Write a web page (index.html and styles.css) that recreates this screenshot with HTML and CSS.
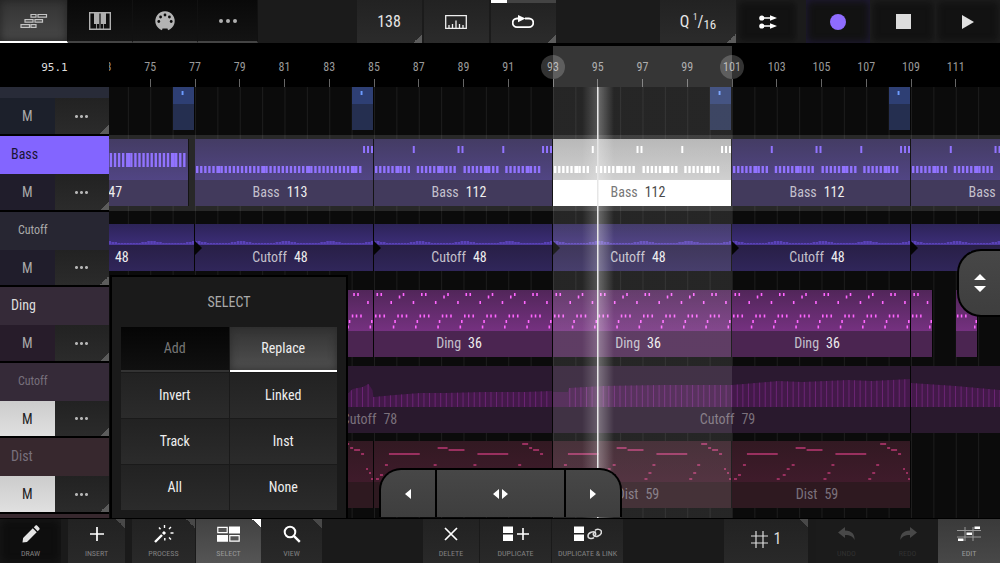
FILE: index.html
```html
<!DOCTYPE html>
<html lang="en">

<head>
    <meta charset="utf-8">
    <meta name="viewport" content="width=device-width, initial-scale=1">
    <title>Arranger</title>
    <link rel="stylesheet" href="styles.css">
</head>

<body>
    <header class="topbar">
        <nav class="group tabs">
            <button class="tab active" aria-label="Arrange">
                <svg width="28" height="16" viewBox="0 0 28 16" fill="none" stroke="#c4c4c4" stroke-width="1.2">
                    <path d="M11 1.5h5v2.6h-5zM18 1.5h8.500v2.600H18zM5 6.600h8v2.600H5zM15 6.600h7.500v2.600H15zM1 11.700h8.500v2.600H1zM11 11.700h5v2.600h-5z" />
                </svg>
            </button>
            <button class="tab" aria-label="Keys">
                <svg width="22" height="18" viewBox="0 0 22 18">
                    <path d="M.7.7h20.600v16.600H.7z" fill="none" stroke="#b0b0b0" stroke-width="1.400" />
                    <path d="M5 1h5v11H5zM12 1h5v11h-5z" fill="#b0b0b0" />
                    <path d="M7.500 12v5M14.500 12v5M11 1v16" stroke="#b0b0b0" stroke-width=".8" />
                </svg>
            </button>
            <button class="tab" aria-label="Midi">
                <svg width="20" height="20" viewBox="0 0 20 20">
                    <path d="M7 19.200A9.700 9.700 0 1 1 13 19.200L12.500 17.500h-5z" fill="#b4b4b4" />
                    <g fill="#0c0c0c">
                        <circle cx="3.800" cy="10.500" r="1.400" /><circle cx="5.600" cy="6" r="1.400" />
                        <circle cx="10" cy="4" r="1.400" /><circle cx="14.400" cy="6" r="1.400" />
                        <circle cx="16.200" cy="10.500" r="1.400" />
                    </g>
                </svg>
            </button>
            <button class="tab" aria-label="More"><svg width="18" height="4" fill="#b0b0b0"><circle cx="2" cy="2" r="2" /><circle cx="9" cy="2" r="2" /><circle cx="16" cy="2" r="2" /></svg></button>
        </nav>

        <div class="group transport">
            <button class="tool corner value">138</button>
            <button class="tool" aria-label="Metronome">
                <svg width="22" height="14" viewBox="0 0 22 14" fill="none" stroke="#eee" stroke-width="1.300">
                    <path d="M.7.7h20.600v12.600H.7zM4 13v-3M7.500 13v-4M11 13V5.500M14.500 13v-4M18 13v-3" />
                </svg>
            </button>
            <button class="tool corner loop" aria-label="Loop">
                <svg width="22" height="14" viewBox="0 0 22 14">
                    <path d="M6 3.500H5a4.200 4.200 0 0 0 0 8.600h12a4.300 4.300 0 0 0 0-8.600h-4" fill="none" stroke="#fff" stroke-width="1.800" />
                    <path d="M6 0l7.500 3.600L6 7.200z" fill="#fff" />
                </svg>
            </button>
        </div>

        <div class="group play">
            <button class="tool corner quant">Q <sup>1</sup>/<sub>16</sub></button>
            <button class="tool dark follow" aria-label="Follow">
                <svg width="18" height="14" viewBox="0 0 18 14" fill="#fff">
                    <circle cx="2.800" cy="3" r="2.600" /><circle cx="2.800" cy="11" r="2.600" />
                    <path d="M3 2.300h8V.2L18 3l-7 2.800V3.700H3zM3 10.300h8V8.200l7 2.800-7 2.800v-2.100H3z" />
                </svg>
            </button>
            <button class="tool dark record" aria-label="Record"><svg width="16" height="16"><circle cx="8" cy="8" r="8" fill="#8f6cff" /></svg></button>
            <button class="tool dark" aria-label="Stop"><svg width="15" height="15"><rect width="15" height="15" fill="#dcdcdc" /></svg></button>
            <button class="tool dark" aria-label="Play"><svg width="12" height="14"><path d="M0 0l12 7-12 7z" fill="#e0e0e0" /></svg></button>
        </div>
    </header>

    <main class="arranger">
        <aside class="sidebar">
            <div class="position">95.1</div>
            <div class="track-list">
                <section class="track t-drums">
                    <h2></h2>
                    <div class="track-buttons"><button>M</button><button class="corner" aria-label="Options"><span class="dots"></span></button></div>
                </section>
                <section class="track t-bass">
                    <h2>Bass</h2>
                    <div class="track-buttons"><button>M</button><button class="corner" aria-label="Options"><span class="dots"></span></button></div>
                </section>
                <section class="track sub t-cutoff">
                    <h2>Cutoff</h2>
                    <div class="track-buttons"><button>M</button><button class="corner" aria-label="Options"><span class="dots"></span></button></div>
                </section>
                <section class="track t-ding">
                    <h2>Ding</h2>
                    <div class="track-buttons"><button>M</button><button class="corner" aria-label="Options"><span class="dots"></span></button></div>
                </section>
                <section class="track sub muted t-ding">
                    <h2>Cutoff</h2>
                    <div class="track-buttons"><button>M</button><button class="corner" aria-label="Options"><span class="dots"></span></button></div>
                </section>
                <section class="track muted t-dist">
                    <h2>Dist</h2>
                    <div class="track-buttons"><button>M</button><button class="corner" aria-label="Options"><span class="dots"></span></button></div>
                </section>
                <section class="track t-dist"><h2></h2></section>
            </div>
        </aside>

        <div class="timeline">
            <div class="ruler" id="ruler"></div>
            <div class="lanes">
                <div class="lane drums" id="drums"></div>
                <div class="lane bass" id="bass"></div>
                <div class="lane sub cutoff" id="cutoff"></div>
                <div class="lane ding" id="ding"></div>
                <div class="lane sub filter" id="filter"></div>
                <div class="lane dist" id="dist"></div>
            </div>
            <div class="selection"></div>
            <div class="playhead"></div>
            <div class="nudge">
                <button aria-label="Back"><svg width="6" height="10"><path d="M6 0v10L0 5z" /></svg></button>
                <button aria-label="Move"><svg width="15" height="10"><path d="M6 0v10L0 5zM9 0v10l6-5z" /></svg></button>
                <button aria-label="Forward"><svg width="6" height="10"><path d="M0 0v10l6-5z" /></svg></button>
            </div>
            <button class="side-handle" aria-label="Zoom tracks"><svg width="12" height="18"><path d="M0 6h12L6 0zM0 12h12l-6 6z" /></svg></button>
            <div class="popup">
                <h3>SELECT</h3>
                <div class="options">
                    <button class="off">Add</button><button class="on">Replace</button>
                    <button>Invert</button><button>Linked</button>
                    <button>Track</button><button>Inst</button>
                    <button>All</button><button>None</button>
                </div>
            </div>
        </div>
    </main>

    <footer class="bottombar">
        <div class="group tools">
            <button class="draw">
                <svg width="18" height="18" viewBox="0 0 18 18" fill="#e4e4e4"><path d="M.5 17.500l.6-4.500L10.800 3.300l3.900 3.900L5 16.900zM11.800 2.300l1.500-1.500c.6-.6 1.400-.6 2 0l1.900 1.900c.6.6.6 1.400 0 2l-1.500 1.500z" /></svg>
                DRAW
            </button>
            <button class="insert corner-top">
                <svg width="18" height="18" viewBox="0 0 18 18"><path d="M9 2v14M2 9h14" stroke="#fff" stroke-width="1.700" /></svg>
                INSERT
            </button>
            <button class="process corner-top">
                <svg width="20" height="18" viewBox="0 0 20 18" stroke="#fff"><path d="M1 17l7-7" stroke-width="2.400" /><path d="M9 9l2-2" stroke-width="3" /><path d="M10.500 0v3M5 2.500l1.500 1.800M17 2l-2 2M16.500 8h3M15 12.500l2 2M10.800 13v2.500" stroke-width="1.400" /></svg>
                PROCESS
            </button>
            <button class="select corner-top">
                <svg width="23" height="18" viewBox="0 0 23 18"><path d="M.8 2.300h9.400v5.400H.8zM12.800 10.700h9.400v5.400h-9.400z" fill="#555" stroke="#fff" stroke-width="1.200" /><path d="M12 1.600h11v6.800H12zM0 10h11v6.800H0z" fill="#fff" /></svg>
                SELECT
            </button>
            <button class="view corner-top">
                <svg width="18" height="18" viewBox="0 0 18 18" fill="none" stroke="#fff"><circle cx="7" cy="7" r="5.300" stroke-width="2" /><path d="M10.800 10.800l6 6" stroke-width="2.400" /></svg>
                VIEW
            </button>
        </div>

        <div class="group edit-tools">
            <button class="delete">
                <svg width="18" height="18" viewBox="0 0 18 18"><path d="M3 3l12 12M15 3L3 15" stroke="#fff" stroke-width="1.700" /></svg>
                DELETE
            </button>
            <button class="duplicate">
                <svg width="28" height="18" viewBox="0 0 28 18"><path d="M1 1.500h10v6.500H1zM1 9.500h10V16H1z" fill="#fff" /><path d="M21 3v12M15 9h12" stroke="#fff" stroke-width="1.600" /></svg>
                DUPLICATE
            </button>
            <button class="duplicate">
                <svg width="28" height="18" viewBox="0 0 28 18"><path d="M0 1.500h10v6.500H0zM0 9.500h10V16H0z" fill="#fff" /><g fill="none" stroke="#ddd" stroke-width="1.500"><path d="M20 12.500c-1.500 1.500-6 1.500-6-1.500 0-3.500 6-5.500 7.500-3 .8 1.500-.5 3-2 3" /><path d="M21 5.500c1.500-2 6.500-1.500 6.500 1.500 0 3.500-6 6-8 3-.8-1.500.8-3 2.500-3" /></g></svg>
                DUPLICATE &amp; LINK
            </button>
        </div>

        <div class="group history">
            <button class="grid-size corner-top">
                <svg width="17" height="17" viewBox="0 0 17 17"><path d="M5 0v17M12 0v17M0 5h17M0 12h17" stroke="#ddd" stroke-width="1.200" /></svg>
                1
            </button>
            <button class="undo" disabled>
                <svg width="18" height="18" viewBox="0 0 18 18" fill="#484848"><path d="M7 2v3.500c7 .2 10 4 9.500 9.500-1.500-3.500-4-5-9.500-5V13L0 7.500z" /></svg>
                UNDO
            </button>
            <button class="undo" disabled>
                <svg width="18" height="18" viewBox="0 0 18 18" fill="#484848"><path d="M11 2v3.500c-7 .2-10 4-9.500 9.500 1.500-3.500 4-5 9.500-5V13l7-5.500z" /></svg>
                REDO
            </button>
            <button class="edit">
                <svg width="24" height="18" viewBox="0 0 24 18"><path d="M8 2v14M16 2v14M0 5.500h24M0 12h24" stroke="#999" stroke-width="1" /><path d="M17.500 1.500h5.500v2.500h-5.500zM9.500 7.500h5.500v2.500H9.500zM1 13.500h5.500V16H1z" fill="#fff" /></svg>
                EDIT
            </button>
        </div>
    </footer>

    <script src="script.js"></script>
</body>

</html>
```
FILE: styles.css
```css
*,
*:before,
*:after {
    padding: 0;
    margin: 0;
    box-sizing: border-box;
}

:root {
    --phrase: 179px;
    --bar: calc(var(--phrase) / 8);
    --start: -93px;
}

body {
    height: 100vh;
    display: flex;
    flex-direction: column;
    overflow: hidden;
    background: #000;
    color: #ddd;
    font-family: "Roboto Condensed", "Open Sans Condensed", "Liberation Sans Narrow", "DejaVu Sans Condensed", sans-serif;
    font-size: 14px;
}

button {
    border: 0;
    background: none;
    color: inherit;
    font: inherit;
    display: flex;
    align-items: center;
    justify-content: center;
}

svg {
    display: block;
    flex: none;
}

.group {
    display: flex;
}

.dots {
    width: 15px;
    height: 5px;
    background: radial-gradient(circle, #b4b4b4 1px, transparent 2px) 0 0 / 5px 5px;
}

/* top bar */

.topbar {
    height: 44px;
    flex: none;
    display: flex;
    justify-content: space-between;
    background: #1b1b1b;
    border-bottom: 1px solid #000;
    font-size: 16px;
}

.tab {
    width: 65px;
    background: linear-gradient(#090909, #131313);
    border-bottom: 2px solid #444;
    border-right: 1px solid #111;
}

.tab.active {
    width: 68px;
    background: linear-gradient(#333, #484848);
    border-bottom-color: #fff;
    box-shadow: inset 0 0 8px #222;
}

.tab:last-child {
    width: 60px;
}

.transport {
    margin-right: 6px;
    gap: 2px;
}

.tool {
    width: 65px;
    background: linear-gradient(#222, #2b2b2b);
    color: #e6e6e6;
}

.tool.corner,
.track-buttons .corner {
    background: linear-gradient(135deg, transparent 50%, #5c5c5c 50%) right bottom / 9px 9px no-repeat, linear-gradient(#222, #2b2b2b);
}

.loop {
    position: relative;
}

.loop:before {
    content: "";
    position: absolute;
    top: 0;
    left: 0;
    width: 100%;
    height: 3px;
    background: linear-gradient(90deg, #fff 16px, #444 16px);
}

.play {
    gap: 1px;
}

.tool.dark {
    width: 64px;
    background: #121212;
    box-shadow: inset 0 0 8px #222;
}

.tool.follow {
    width: 61px;
}

.tool.quant {
    width: 76px;
    white-space: pre;
}

.quant sup {
    font-size: 9px;
    align-self: flex-start;
    padding-top: 12px;
}

.quant sub {
    font-size: 13px;
    padding-top: 6px;
}

.tool.record {
    margin-left: 7px;
    box-shadow: inset 0 0 8px #221c3c;
}

/* arranger */

.arranger {
    flex: 1;
    min-height: 0;
    display: grid;
    grid-template-columns: 109px 1fr;
}

.sidebar,
.timeline {
    display: flex;
    flex-direction: column;
    min-width: 0;
    overflow: hidden;
}

.position {
    height: 43px;
    flex: none;
    display: flex;
    align-items: center;
    justify-content: center;
    padding-top: 3px;
    font-family: "DejaVu Sans Mono", monospace;
    font-size: 11px;
}

.track-list,
.lanes {
    flex: 1;
    min-height: 0;
    overflow: hidden;
}

.track,
.lane {
    height: 76px;
    border-top: 1px solid #000;
}

.track.sub,
.lane.sub {
    height: 75px;
}

.track {
    display: flex;
    flex-direction: column;
}

.track:first-child,
.lane:first-child {
    margin-top: -28px;
}

.track h2 {
    height: 38px;
    flex: none;
    padding-left: 11px;
    font-size: 14px;
    font-weight: normal;
    line-height: 37px;
}

.track.sub h2 {
    padding-left: 18px;
    font-size: 12px;
    color: #aaa;
}

.track.muted h2 {
    color: #77707c;
}

.track-buttons {
    flex: 1;
    display: grid;
    grid-template-columns: 1fr 1fr;
    border-bottom: 1px solid #000;
    color: #aaa;
}

.t-drums h2 { background: #282b38; }
.t-drums button:first-child { background: #1c202b; }
.t-bass h2 { background: #8365ff; color: #1a1433; }
.t-bass button:first-child { background: #201d2b; }
.t-cutoff h2 { background: #272632; }
.t-cutoff button:first-child { background: #201d2b; }
.t-ding h2 { background: #352a38; }
.t-ding button:first-child { background: #271c2a; }
.t-dist h2 { background: #37282e; }

.muted button:first-child {
    background: linear-gradient(#ccc, #e0e0e0);
    color: #222;
}

/* timeline */

.timeline {
    position: relative;
}

/* ruler begins at bar 72, so every cell is centred on an odd bar */
.ruler {
    height: 43px;
    flex: none;
    display: flex;
    margin-left: calc(var(--start) + var(--bar) * 3);
    font-size: 12px;
    color: #999;
}

.ruler span {
    width: calc(var(--bar) * 2);
    flex: none;
    padding-top: 16px;
    text-align: center;
    background: linear-gradient(#666, #666) center bottom / 1px 8px no-repeat;
}

.lanes {
    background: #0b0b0b linear-gradient(90deg, #1d1d1d 1px, transparent 1px) var(--start) 0 / var(--bar) 100%;
}

.lane {
    display: flex;
    align-items: flex-start;
    padding-top: 3px;
    margin-left: var(--start);
    border-top-color: transparent;
}

.lane.bass {
    background: rgba(255, 255, 255, .12);
}

.lane.cutoff {
    padding-top: 12px;
}

.clip {
    flex: none;
    height: 67px;
    display: flex;
    flex-direction: column;
    border-right: 1px solid rgba(0, 0, 0, .5);
}

.clip svg {
    width: 100%;
    height: 41px;
}

.clip p {
    flex: 1;
    display: flex;
    align-items: center;
    justify-content: center;
    gap: 7px;
    padding: 0 8px 2px 0;
    white-space: nowrap;
    overflow: hidden;
    color: #c4c0cc;
}

.clip b {
    font-weight: normal;
    color: #eee;
}

.drums svg { background: #2e3f74; fill: #6d9cff; }
.drums p { background: #252f50; }
.bass svg { background: linear-gradient(#443c64, #514584); fill: #9173ff; }
.bass p { background: #423a5c; }
.cutoff svg { background: linear-gradient(#2d2458, #3c2d78); fill: #5a42b8; }
.cutoff p { background: linear-gradient(#281f46, #30265a); }
.ding svg { background: linear-gradient(#512659, #753180); fill: #ff66ff; }
.ding p { background: #4b2551; }
.filter svg { background: #2b1930; fill: #431949; stroke: #6b2574; }
.filter p { background: #29192d; }
.dist svg { background: linear-gradient(#321922, #3f1b2b); fill: #99305f; }
.dist p { background: #2e1920; }

.filter p,
.filter b,
.dist p,
.dist b {
    color: #7b717c;
}

.cutoff .clip {
    height: 47px;
    position: relative;
}

.cutoff .clip svg {
    height: 21px;
}

.cutoff .clip:before {
    content: "";
    position: absolute;
    left: 0;
    top: 17px;
    border: 7px solid transparent;
    border-left-color: #050505;
    border-right: 0;
}

.bass .picked svg { background: linear-gradient(#b0b0b0, #cacaca); fill: #fff; }
.bass .picked p { background: #fff; color: #666; }
.bass .picked b { color: #333; }

.selection {
    position: absolute;
    top: 2px;
    bottom: 0;
    left: calc(var(--start) + var(--phrase) * 3);
    width: var(--phrase);
    background: linear-gradient(rgba(255, 255, 255, .21) 41px, rgba(255, 255, 255, .11) 41px);
}

.selection:before,
.selection:after {
    content: "";
    position: absolute;
    top: 9px;
    left: -12px;
    width: 24px;
    height: 24px;
    border-radius: 50%;
    background: rgba(255, 255, 255, .2);
}

.selection:after {
    left: auto;
    right: -12px;
}

.playhead {
    position: absolute;
    top: 43px;
    bottom: 0;
    left: calc(var(--start) + var(--phrase) * 3 + var(--bar) * 2 - 16px);
    width: 32px;
    background: linear-gradient(90deg, transparent, rgba(255, 255, 255, .2) 15px, #e6e6e6 15px, #e6e6e6 16px, rgba(255, 255, 255, .3) 17px, transparent);
}

.nudge {
    position: absolute;
    left: 270px;
    bottom: 1px;
    width: 243px;
    height: 49px;
    display: grid;
    grid-template-columns: 54px 1fr 54px;
    gap: 2px;
    border: 2px solid #000;
    border-bottom: 0;
    border-radius: 22px 22px 0 0;
    overflow: hidden;
    background: #000;
    fill: #fff;
}

.nudge button,
.side-handle {
    background: linear-gradient(#474747, #3e3e3e);
}

.side-handle {
    position: absolute;
    right: 0;
    top: 205px;
    width: 43px;
    height: 68px;
    border: 2px solid #000;
    border-right: 0;
    border-radius: 24px 0 0 24px;
    fill: #fff;
}

.popup {
    position: absolute;
    left: 1px;
    bottom: 0;
    width: 238px;
    padding: 0 9px 8px;
    border: 2px solid #000;
    border-bottom: 0;
    background: #1a1a1a;
}

.popup h3 {
    font-size: 14px;
    font-weight: normal;
    line-height: 50px;
    text-align: center;
    color: #aaa;
}

.options {
    display: grid;
    grid-template-columns: 1fr 1fr;
    grid-auto-rows: 45px;
    gap: 1px;
}

.options button {
    padding-bottom: 1px;
    background: linear-gradient(#222, #2b2b2b);
    color: #eee;
}

.options .off {
    background: linear-gradient(#050505, #101010);
    border-bottom: 2px solid #333;
    color: #777;
}

.options .on {
    background: linear-gradient(#333, #505050);
    border-bottom: 2px solid #fff;
    box-shadow: inset 0 0 8px #2c2c2c;
}

/* bottom bar */

.bottombar {
    height: 45px;
    flex: none;
    display: flex;
    justify-content: space-between;
    background: #1a1a1a;
    border-top: 1px solid #000;
}

.bottombar button {
    flex-direction: column;
    gap: 6px;
    padding-top: 1px;
    background-image: linear-gradient(#222, #292929);
    font-size: 8px;
    line-height: 10px;
    color: #808080;
    white-space: nowrap;
}

.bottombar .corner-top {
    background: linear-gradient(45deg, transparent 50%, #484848 50%) right top / 9px 9px no-repeat, linear-gradient(#222, #292929);
}

.draw { width: 61px; }
.insert { width: 57px; margin-left: 7px; }
.process { width: 63px; margin-left: 7px; }
.select { width: 65px; margin-left: 1px; }
.view { width: 61px; }
.delete { width: 56px; }
.duplicate { width: 71px; }
.undo { width: 61px; }
.edit { width: 62px; }

.edit-tools {
    gap: 1px;
}

.bottombar .draw {
    background: #0e0e0e;
    box-shadow: inset 0 0 8px #1a1a1a;
}

.bottombar .select {
    background: linear-gradient(45deg, transparent 50%, #fff 50%) right top / 9px 9px no-repeat, linear-gradient(#424242, #555);
    color: #999;
}

.bottombar .grid-size {
    width: 84px;
    margin-right: 8px;
    padding: 0 0 4px;
    flex-direction: row;
    font-size: 16px;
    color: #ddd;
}

.bottombar .undo {
    background: #1b1b1b;
    color: #303030;
}

.bottombar .edit {
    background: linear-gradient(#3a3a3a, #484848);
    color: #999;
}
```
FILE: script.js
```js
const barWidth = 179 / 8;
const firstBar = 69;

const rect = (x, y, w, h) => `<rect x="${x}" y="${y}" width="${w}" height="${h}"/>`;

// bass: high accents plus low groups of sixteenths
function bassNotes(accents, groups, top = 27, height = 7) {
    let out = accents.map(x => rect(x, 7, 2, 7)).join("");
    for (const [from, to] of groups) {
        let i = 0;
        for (let x = from; x < to - 1; x += 4.1) {
            out += rect(x, top, i % 11 == 5 ? 4 : 2.4, height);
            i++;
        }
    }
    return out;
}

function cutoffNotes(bars) {
    let out = "";
    for (let x = 0; x < bars * barWidth; x += 3) {
        const phase = x % (barWidth * 2);
        const d = Math.min(phase, barWidth * 2 - phase);
        const h = d < 5 ? 3 : d < 11 ? 2 : 1;
        out += rect(x, 20 - h, 2.6, h);
    }
    return out + rect(0, 20, 400, 0.6);
}

function dingNotes(bars) {
    const shapes = "ABABABBA";
    let out = "";
    for (let i = 0; i <= bars; i++) {
        const x = i * barWidth;
        if (i > 0) out += rect(x - 2, 30, 1.6, 3) + rect(x - 3.5, 35.5, 1.6, 3);
        if (i == bars) break;
        for (const n of [1, 5, 9.5]) out += rect(x + n, 24.5, 1.6, 3);
        out += rect(x + 2.5, shapes[i] == "A" ? 3 : 5.5, 1.6, 3);
        out += rect(x + 6.5, 3, 1.6, 3) + rect(x + 16.5, 11, 1.6, 3);
    }
    return out;
}

function distNotes() {
    const notes = [[2, 5, 37], [6, 9, 33], [11, 14, 23], [15, 46, 12], [45, 48, 37], [51, 54, 33], [55, 58, 27],
        [60, 63, 23], [64, 74, 6], [75, 91, 8], [92, 95, 37], [96, 99, 31], [100, 103, 23], [104, 135, 12],
        [137, 140, 37], [141, 144, 31], [145, 148, 23], [149, 155, 2], [156, 159, 6], [160, 166, 8],
        [167, 170, 12], [172, 174, 27], [175, 177, 31], [177, 179, 37]];
    return notes.map(([a, b, y]) => rect(a, y, b - a, 2)).join("");
}

// automation curve: filled area with a step line every few pixels
function curve(points, linesFrom = 0) {
    const last = points[points.length - 1];
    const area = points.map(p => p.join(" ")).join("L");
    let lines = "";
    for (let i = 1; i < points.length; i++) {
        const [x0, y0] = points[i - 1], [x1, y1] = points[i];
        for (let x = Math.ceil(x0 / 5.6) * 5.6; x < x1; x += 5.6) {
            if (x >= linesFrom) lines += `M${x} 41V${y0 + (y1 - y0) * (x - x0) / (x1 - x0)}`;
        }
    }
    return `<path stroke="none" d="M${points[0][0]} 41L${area}L${last[0]} 41z"/><path fill="none" d="${lines}"/>`;
}

const accents = [39, 84, 88, 129, 169, 173, 177];
const phraseGroups = [[1, 37], [43, 82], [90, 127], [132, 168]];
const bass112 = bassNotes(accents, phraseGroups);
const hit = rect(9, 28, 2, 4);

// [first bar, length in bars, name, number, notes]
const lanes = {
    drums: [76, 84, 100, 108].map(bar => [bar, 1, "", "", hit]),
    bass: [
        [69, 7.75, "Bass", 47, bassNotes([], [[0, 172]], 14, 14)],
        [77, 8, "Bass", 113, bassNotes([169, 173, 177], [[1, 168]])],
        [85, 8, "Bass", 112, bass112],
        [93, 8, "Bass", 112, bass112, "picked"],
        [101, 8, "Bass", 112, bass112],
        [109, 8, "Bass", 112, bass112]
    ],
    cutoff: [69, 77, 85, 93, 101, 109].map(bar => [bar, 8, "Cutoff", 48, cutoffNotes(8)]),
    ding: [
        [77, 8, "", "", dingNotes(8)],
        ...[85, 93, 101].map(bar => [bar, 8, "Ding", 36, dingNotes(8)]),
        [109, 1, "", "", dingNotes(1)],
        [111, 1, "", "", dingNotes(1)]
    ],
    filter: [
        [77, 16, "Cutoff", 78, curve([[140, 30], [154, 27], [158, 23], [168, 21], [174, 18], [178, 24], [179, 31], [200, 29], [226, 27], [250, 27], [290, 26], [330, 26], [358, 25]])],
        [93, 16, "Cutoff", 79, curve([[0, 26], [15, 26], [16, 22], [50, 20], [110, 19], [147, 19], [179, 19], [203, 17], [226, 15], [250, 16], [296, 14], [320, 15], [358, 13]], 16)],
        [109, 8, "", "", curve([[0, 17], [45, 20], [89, 24], [179, 30]])]
    ],
    dist: [
        [77, 8, "", "", distNotes()],
        ...[85, 93, 101].map(bar => [bar, 8, "Dist", 59, distNotes()])
    ]
};

for (const id in lanes) {
    let end = firstBar;
    let html = "";
    const height = id == "cutoff" ? 21 : 41;
    for (const [bar, length, name, number, notes, state] of lanes[id]) {
        const width = length * barWidth;
        html += `<div class="clip ${state || ""}" style="width:${width}px;margin-left:${(bar - end) * barWidth}px">
            <svg viewBox="0 0 ${width} ${height}" preserveAspectRatio="none">${notes}</svg>
            <p>${name} <b>${number}</b></p></div>`;
        end = bar + length;
    }
    document.getElementById(id).innerHTML = html;
}

let marks = "";
for (let bar = 73; bar <= 111; bar += 2) {
    marks += `<span>${bar}</span>`;
}
document.getElementById("ruler").innerHTML = marks;
```
